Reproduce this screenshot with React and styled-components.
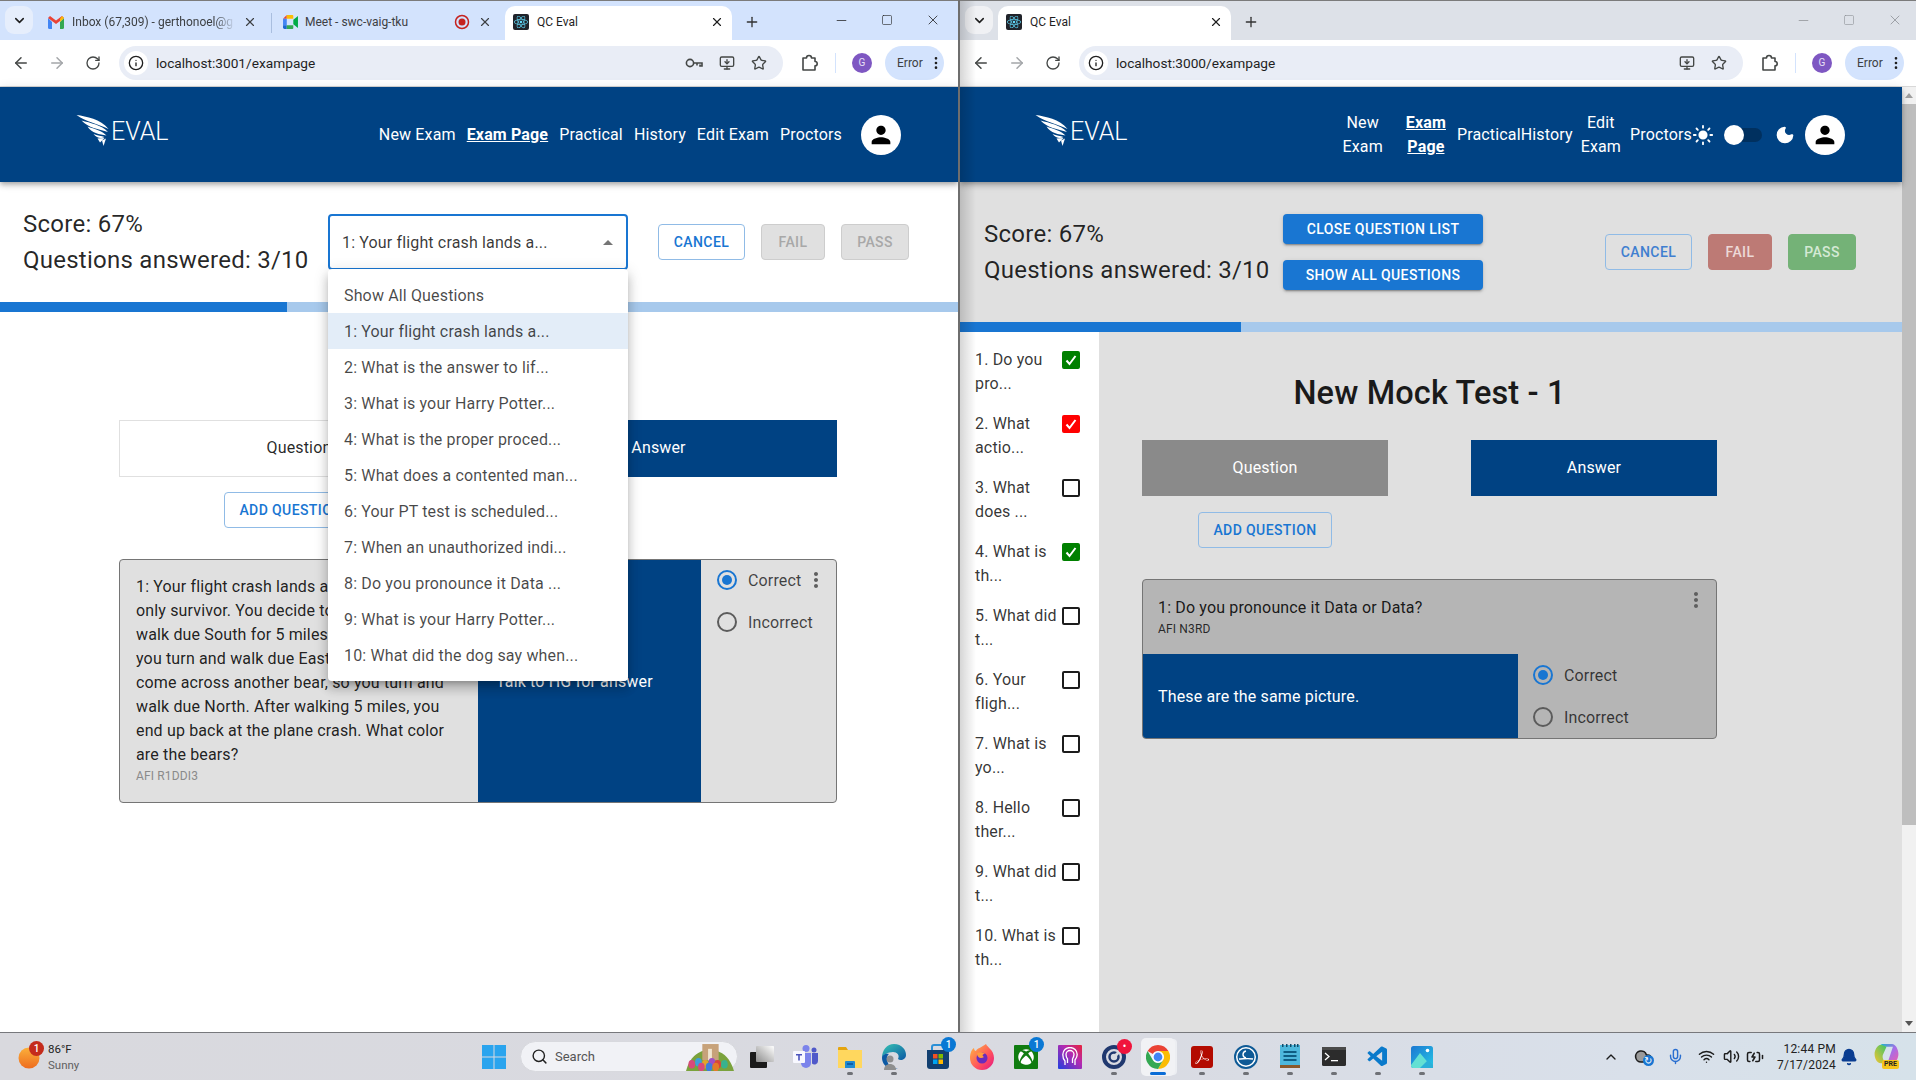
import React from 'react';
import styled, { createGlobalStyle } from 'styled-components';
import { ArrowLeft, ArrowRight, RotateCw, Info, MonitorDown, Star, EllipsisVertical, X, Plus, Minus, Square, ChevronDown, ChevronUp, Sun, Moon, Search, Mic, Wifi, Volume2, BatteryCharging, Bell, Cloud } from 'lucide-react';
import { FaReact, FaXbox } from 'react-icons/fa';
import { SiAdobeacrobatreader } from 'react-icons/si';
import { VscVscode } from 'react-icons/vsc';

const Global = createGlobalStyle`
  html, body { margin: 0; padding: 0; height: 1080px; overflow: hidden; background: #fff; }
  body { font-family: Roboto, "Liberation Sans", sans-serif; color: rgba(0,0,0,.87); letter-spacing: .15px; }
  * { box-sizing: border-box; }
`;

const Desktop = styled.div`display:flex;flex-direction:column;width:1916px;height:1080px;`;
const Windows = styled.div`display:flex;height:1032px;background:#6e6e6e;`;
const Win = styled.section`
  position:relative;display:flex;flex-direction:column;width:${p => p.$w}px;margin-left:${p => p.$ml || 0}px;
  overflow:hidden;background:#fff;border-top:1px solid #7b7b7b;
`;
const WinShadow = styled.div`
  position:absolute;left:0;top:0;bottom:0;width:16px;pointer-events:none;z-index:9;
  background:linear-gradient(90deg, rgba(0,0,0,.16), rgba(0,0,0,0));
`;

/* browser chrome */
const TabStrip = styled.div`
  display:flex;align-items:flex-end;height:39px;padding-left:5px;background:${p => p.$bg};letter-spacing:0;
`;
const TabMenu = styled.div`
  display:flex;align-items:center;justify-content:center;width:28px;height:28px;margin-bottom:6px;border-radius:9px;
  background:${p => p.$bg};color:#1f1f1f;
`;
const Tab = styled.div`
  position:relative;display:flex;align-items:center;gap:8px;width:${p => p.$w}px;height:34px;padding:0 8px 2px;margin-left:${p => p.$ml || 0}px;
  font-size:12px;color:${p => p.$active ? '#1f1f1f' : '#3d4043'};
  background:${p => p.$active ? '#fff' : 'transparent'};border-radius:10px 10px 0 0;
`;
const TabTitle = styled.span`
  flex:1;white-space:nowrap;overflow:hidden;
  ${p => p.$fade ? 'mask-image:linear-gradient(90deg,#000 88%,transparent);' : ''}
`;
const TabDivider = styled.div`width:1px;height:20px;margin:0 3px 7px 6px;background:#a9bedf;`;
const NewTab = styled.div`display:flex;align-items:center;justify-content:center;width:40px;height:34px;padding-bottom:2px;color:#333;`;
const WinControls = styled.div`
  display:flex;margin-left:auto;height:34px;padding-right:${p => p.$dim ? 0 : 2}px;margin-right:${p => p.$dim ? -2 : 0}px;margin-bottom:3px;
  color:${p => p.$dim ? '#8d9096' : '#1f1f1f'};
`;
const WinControl = styled.div`display:flex;align-items:center;justify-content:center;width:46px;`;
const Toolbar = styled.div`
  display:flex;align-items:center;height:47px;padding:0 8px 1px 3px;background:#fff;border-bottom:1px solid #d8d8d8;letter-spacing:0;
`;
const ToolBtn = styled.div`display:flex;align-items:center;justify-content:center;width:36px;color:${p => p.$dim ? '#a4a6a9' : '#444746'};`;
const Omnibox = styled.div`
  display:flex;align-items:center;flex:0 0 664px;height:34px;margin-left:8px;padding:0 16px 0 5px;border-radius:17px;background:#e9edf6;
  font-size:13.7px;color:#1f1f1f;
`;
const InfoChip = styled.div`display:flex;align-items:center;justify-content:center;width:24px;height:24px;margin-right:8px;border-radius:50%;background:#fff;`;
const OmniText = styled.span`flex:1;`;
const OmniIcons = styled.div`display:flex;gap:16px;color:#444746;`;
const ExtSlot = styled.div`display:flex;justify-content:center;width:52px;color:#444746;line-height:0;`;
const ToolSep = styled.div`width:1px;height:20px;background:#d3e3fd;`;
const ProfileDot = styled.div`
  display:flex;align-items:center;justify-content:center;width:20px;height:20px;margin-left:16px;border-radius:50%;
  background:#7e57c2;color:#e7e0f5;font-size:10px;
`;
const ErrorChip = styled.div`
  display:flex;align-items:center;gap:5px;height:34px;margin-left:13px;padding:0 0 0 12px;border-radius:17px;background:#d3e3fd;
  font-size:12px;color:#3c4043;
`;

/* app */
const Body = styled.div`display:flex;flex:1;min-height:0;`;
const Page = styled.main`display:flex;flex-direction:column;flex:1;min-width:0;background:${p => p.$dark ? '#e0e0e0' : '#fff'};`;
const AppBar = styled.header`
  position:relative;z-index:2;display:flex;align-items:center;flex:0 0 95px;padding:0 57px 0 ${p => p.$pl}px;background:#004283;color:#fff;
  box-shadow:0 2px 4px -1px rgba(0,0,0,.2),0 4px 5px rgba(0,0,0,.14),0 1px 10px rgba(0,0,0,.12);
`;
const Logo = styled.div`display:flex;align-items:center;gap:1px;margin-top:-8px;`;
const LogoWord = styled.span`margin-top:3px;font-size:25px;font-weight:300;letter-spacing:0;line-height:28px;`;
const Nav = styled.nav`display:flex;align-items:center;margin-left:auto;`;
const NavItem = styled.a`
  margin-left:${p => p.$ml}px;font-size:16px;line-height:24px;text-align:center;color:#fff;
  ${p => p.$wrap ? 'width:min-content;' : 'white-space:nowrap;'}
  ${p => p.$on ? 'font-weight:700;text-decoration:underline;' : ''}
`;
const Mode = styled.div`display:flex;align-items:center;color:#fff;`;
const Switch = styled.div`
  display:flex;align-items:center;width:38px;height:14px;margin:0 13px 0 10px;border-radius:7px;background:#00305f;
`;
const SwitchThumb = styled.span`width:20px;height:20px;border-radius:50%;background:#fff;`;
const AvatarBtn = styled.div`
  display:flex;align-items:center;justify-content:center;width:40px;height:40px;margin-left:${p => p.$ml}px;border-radius:50%;background:#fff;
`;
const ScoreRow = styled.div`
  display:flex;align-items:center;flex:0 0 ${p => p.$h}px;padding:0 46px 0 ${p => p.$pl}px;
`;
const Score = styled.div`
  flex:0 0 ${p => p.$w}px;font-size:24px;letter-spacing:.25px;line-height:36px;color:rgba(0,0,0,.85);
`;
const SelectWrap = styled.div`position:relative;width:300px;`;
const SelectBox = styled.div`
  display:flex;align-items:center;justify-content:space-between;height:56px;padding:0 12px;border:2px solid #1976d2;border-radius:4px;background:#fff;font-size:16px;
  color:rgba(0,0,0,.78);
`;
const Caret = styled.span`width:0;height:0;border-left:5px solid transparent;border-right:5px solid transparent;border-bottom:5px solid #757575;margin-right:1px;`;
const Menu = styled.ul`
  position:absolute;z-index:5;left:0;top:55px;width:300px;margin:0;padding:8px 0;list-style:none;background:#fff;border-radius:4px;
  box-shadow:0 5px 5px -3px rgba(0,0,0,.2),0 8px 10px 1px rgba(0,0,0,.14),0 3px 14px 2px rgba(0,0,0,.12);
`;
const MenuItem = styled.li`
  display:flex;align-items:center;height:36px;padding:0 16px;font-size:16px;color:rgba(0,0,0,.72);
  background:${p => p.$sel ? '#e3edf8' : 'transparent'};
`;
const Actions = styled.div`display:flex;gap:16px;margin-left:${p => p.$auto ? 'auto' : '30px'};`;
const Action = styled.button`
  width:${p => p.$w}px;height:36px;padding:0;border-radius:4px;font:500 14px/1 Roboto,sans-serif;letter-spacing:.4px;text-transform:uppercase;
  border:1px solid ${p => p.$border};background:${p => p.$bg};color:${p => p.$fg};
`;
const Solids = styled.div`display:flex;flex-direction:column;gap:16px;margin-top:-1px;`;
const Solid = styled.button`
  width:200px;height:30px;border:0;border-radius:4px;background:#1976d2;color:#fff;font:500 14px/1 Roboto,sans-serif;letter-spacing:.4px;text-transform:uppercase;
  box-shadow:0 3px 1px -2px rgba(0,0,0,.2),0 2px 2px rgba(0,0,0,.14),0 1px 5px rgba(0,0,0,.12);
`;
const Progress = styled.div`display:flex;flex:0 0 10px;background:#a7c9ec;`;
const ProgressFill = styled.div`height:100%;background:#1976d2;`;

const Column = styled.div`width:${p => p.$w}px;margin-left:${p => p.$ml}px;padding-top:${p => p.$pt || 0}px;`;
const TabsRow = styled.div`display:flex;justify-content:space-between;`;
const ModeTab = styled.div`
  display:flex;align-items:center;justify-content:center;width:${p => p.$w}px;height:${p => p.$h}px;padding-bottom:2px;font-size:16px;
  background:${p => p.$bg};color:${p => p.$fg};border:${p => p.$line ? '1px solid #e0e0e0' : '0'};
`;
const AddBtn = styled.button`
  display:block;width:134px;height:36px;margin:${p => p.$m};border:1px solid #90bbe6;border-radius:4px;background:transparent;
  color:#1976d2;font:500 14px/1 Roboto,sans-serif;letter-spacing:.4px;
`;
const Card = styled.article`
  position:relative;display:flex;flex-direction:${p => p.$stack ? 'column' : 'row'};height:${p => p.$h}px;margin-top:${p => p.$mt}px;
  border:1px solid #757575;border-radius:4px;overflow:hidden;background:${p => p.$bg};
`;
const Kebab = styled.div`position:absolute;top:8px;right:8px;color:#5f5f5f;line-height:0;`;
const QuestionPane = styled.div`flex:${p => p.$grow ? '1' : `0 0 ${p.$w}px`};padding:${p => p.$pad};font-size:16px;line-height:24px;`;
const Tag = styled.div`font-size:12px;line-height:18px;color:${p => p.$fg};`;
const AnswerRow = styled.div`display:flex;flex:0 0 84px;`;
const AnswerPane = styled.div`
  display:flex;align-items:center;flex:0 0 ${p => p.$w}px;padding-left:${p => p.$pl}px;background:#004283;color:#fff;font-size:16px;
`;
const Grade = styled.div`display:flex;flex-direction:column;gap:${p => p.$gap}px;padding:${p => p.$pt}px 0 0 ${p => p.$pl}px;`;
const GradeRow = styled.label`display:flex;align-items:center;gap:11px;height:20px;font-size:16px;color:rgba(0,0,0,.72);`;
const Radio = styled.span`
  position:relative;width:20px;height:20px;border-radius:50%;border:2px solid ${p => p.$on ? '#1976d2' : '#5c5c5c'};
  &::after{content:'';display:${p => p.$on ? 'block' : 'none'};position:absolute;inset:3px;border-radius:50%;background:#1976d2;}
`;
const Sidebar = styled.aside`display:flex;flex-direction:column;gap:16px;flex:0 0 139px;padding:16px 0 0 15px;background:#fff;`;
const SideItem = styled.div`display:flex;align-items:flex-start;height:48px;font-size:16px;line-height:24px;color:rgba(0,0,0,.8);`;
const SideText = styled.span`flex:0 0 87px;`;
const Check = styled.span`
  display:flex;align-items:center;justify-content:center;width:18px;height:18px;margin-top:3px;border-radius:2px;color:#fff;
  border:2px solid ${p => p.$c || '#1c1c1c'};background:${p => p.$c || 'transparent'};
`;
const MainPane = styled.div`flex:1;min-width:0;`;
const Title = styled.h1`margin:0 0 27px;padding-top:41px;font-size:32.5px;line-height:40px;font-weight:500;text-align:center;color:#1a1a1a;`;
const ScrollBar = styled.div`display:flex;flex-direction:column;flex:0 0 14px;background:#f1f1f1;`;
const ScrollArrow = styled.div`display:flex;align-items:center;justify-content:center;height:17px;`;
const ScrollTri = styled.span`
  width:0;height:0;border-left:4px solid transparent;border-right:4px solid transparent;
  ${p => p.$down ? 'border-top:5px solid #555;' : 'border-bottom:5px solid #a0a0a0;'}
`;
const ScrollThumb = styled.div`height:721px;background:#bebebe;`;
const ScrollSpace = styled.div`flex:1;`;

/* taskbar */
const Taskbar = styled.footer`
  display:flex;align-items:center;flex:0 0 48px;border-top:1px solid #77787c;letter-spacing:0;
  background:linear-gradient(90deg,#d9d9de 0%,#d9dae1 55%,#d9e0ea 85%,#d6e2ea 100%);
`;
const Weather = styled.div`position:relative;display:flex;align-items:center;gap:3px;flex:0 0 482px;padding-left:18px;`;
const WeatherText = styled.div`font-size:11.5px;line-height:16px;color:#222;`;
const WeatherSub = styled.div`color:#5f5f5f;`;
const Bubble = styled.span`
  position:absolute;z-index:2;display:flex;align-items:center;justify-content:center;top:${p => p.$t}px;left:${p => p.$l}px;width:${p => p.$s}px;height:${p => p.$s}px;
  border-radius:50%;background:${p => p.$bg};color:#fff;font-size:10px;font-weight:500;
`;
const Start = styled.div`flex:0 0 24px;line-height:0;`;
const SearchPill = styled.div`
  display:flex;align-items:center;gap:7px;width:218px;height:31px;margin-left:14px;padding:0 3px 0 10px;border-radius:16px;background:#f1f2f6;border:1px solid #d8d9de;
  font-size:13px;color:#555;
`;
const SearchWord = styled.span`flex:1;`;
const Tiles = styled.div`display:flex;margin-left:2px;`;
const Tile = styled.div`
  position:relative;display:flex;flex:0 0 44px;align-items:center;justify-content:center;width:44px;height:44px;
  & > svg { position:relative; z-index:1; }
  ${p => p.$active ? `&::before{content:'';position:absolute;left:5px;right:5px;top:3px;bottom:3px;border-radius:5px;background:#f1f2f5;box-shadow:3px 0 0 -1px #eceef2;}` : ''}
  ${p => p.$mark ? `&::after{content:'';position:absolute;left:50%;bottom:4px;height:3px;border-radius:2px;transform:translateX(-50%);z-index:1;
    width:${p.$active ? '16px' : '6px'};background:${p.$active ? '#0a6cd6' : '#6f7176'};}` : ''}
`;
const Tray = styled.div`display:flex;align-items:center;margin-left:auto;padding-right:16px;color:#1c1c1c;`;
const TraySlot = styled.div`display:flex;justify-content:center;width:${p => p.$w}px;color:${p => p.$c || 'inherit'};`;
const TrayBadgeWrap = styled.span`position:relative;display:flex;`;
const Clock = styled.div`margin-left:8px;font-size:12px;line-height:16px;text-align:right;letter-spacing:.2px;color:#222;`;
const CopilotBox = styled.div`position:relative;width:26px;height:28px;margin-left:12px;`;
const PreTag = styled.span`
  position:absolute;right:1px;bottom:2px;padding:0 2px;border-radius:2px;background:#f6c51b;color:#222;font-size:7px;font-weight:700;line-height:9px;
`;

/* drawings */
const Wing = () => (
  <svg width="34" height="32" viewBox="0 0 33 32" fill="#fff">
    <path d="M0 0C10 1.5 24 4 32 14 22 9 10 7 0 0Z" />
    <path d="M5 5.5C14 8 25 10 31.5 17 22 14 12 13 5 5.5Z" />
    <path d="M11 11.5C18 14 26 16 30 20.5 23 19.5 15 18 11 11.5Z" />
    <path d="M17 19C21 20.5 25 21 28 22 25 24 20 23 17 19Z" />
    <path d="M21 23.5L28 23 23.5 27.5Z" />
    <path d="M25.5 25.5L29.5 23.5 27 31Z" />
  </svg>
);
const Person = () => (
  <svg width="28" height="28" viewBox="0 0 24 24" fill="#000"><path d="M12 12c2.21 0 4-1.79 4-4s-1.79-4-4-4-4 1.79-4 4 1.79 4 4 4m0 2c-2.67 0-8 1.34-8 4v2h16v-2c0-2.66-5.33-4-8-4" /></svg>
);
const MoreVert = () => (
  <svg width="24" height="24" viewBox="0 0 24 24" fill="currentColor"><path d="M12 8c1.1 0 2-.9 2-2s-.9-2-2-2-2 .9-2 2 .9 2 2 2m0 2c-1.1 0-2 .9-2 2s.9 2 2 2 2-.9 2-2-.9-2-2-2m0 6c-1.1 0-2 .9-2 2s.9 2 2 2 2-.9 2-2-.9-2-2-2" /></svg>
);
const KeyGlyph = () => (
  <svg width="18" height="16" viewBox="0 0 18 16" fill="none" stroke="currentColor" strokeWidth="1.600">
    <circle cx="5" cy="8" r="3.600" /><path d="M8.600 8H17v3h-2V9.500" /><path d="M12 8v2.500" />
  </svg>
);
const ExtGlyph = () => (
  <svg width="18" height="18" viewBox="0 0 18 18" fill="none" stroke="currentColor" strokeWidth="1.600" strokeLinejoin="round">
    <path d="M3 4h3.500a2.500 2.500 0 0 1 5 0H15v3.500a2.200 2.200 0 0 1 0 4.400V16H3z" />
  </svg>
);
const Gmail = () => (
  <svg width="16" height="13" viewBox="0 0 16 13"><path d="M0 2v9.5A1.5 1.5 0 0 0 1.5 13H4V6z" fill="#4285f4" /><path d="M16 2v9.5a1.5 1.5 0 0 1-1.500 1.500H12V6z" fill="#34a853" /><path d="M0 2l8 6 8-6-2-2-6 4.500L2 0z" fill="#ea4335" /><path d="M12 3l2-3 2 2-4 4z" fill="#fbbc04" /></svg>
);
const Meet = () => (
  <svg width="15" height="14" viewBox="0 0 16 15" style={{ marginRight: -1 }}><path d="M0 4l4-4v4z" fill="#ea4335" /><path d="M0 4h4v7H0z" fill="#4285f4" /><path d="M0 11h4v4H1.500A1.500 1.500 0 0 1 0 13.500z" fill="#1967d2" /><path d="M4 0h6a1 1 0 0 1 1 1v3H4z" fill="#fbbc04" /><path d="M4 11h7v3a1 1 0 0 1-1 1H4z" fill="#34a853" /><path d="M11 5l5-4v13l-5-4z" fill="#00ac47" /></svg>
);
const RecordDot = () => (
  <svg width="16" height="16" viewBox="0 0 16 16"><circle cx="8" cy="8" r="6.500" fill="none" stroke="#c5221f" strokeWidth="1.500" /><circle cx="8" cy="8" r="3.500" fill="#c5221f" /></svg>
);
const ReactFav = styled.span`display:flex;align-items:center;justify-content:center;width:16px;height:16px;border-radius:2px;background:#20232a;color:#61dafb;flex:none;`;
const Reactish = () => <ReactFav><FaReact size={14} /></ReactFav>;
const WinLogo = () => (
  <svg width="24" height="24" viewBox="0 0 24 24"><path d="M0 0h11.500v11.500H0zM12.500 0H24v11.500H12.500zM0 12.500h11.500V24H0zM12.500 12.500H24V24H12.500z" fill="#2aa4ee" /></svg>
);
const Sunny = () => (
  <svg width="27" height="28" viewBox="0 0 27 28">
    <defs><linearGradient id="sg" x1="0" y1="0" x2="0" y2="1"><stop offset="0" stopColor="#fbb03b" /><stop offset="1" stopColor="#ee6c1e" /></linearGradient></defs>
    <circle cx="11" cy="15" r="10.500" fill="url(#sg)" />
  </svg>
);
const Easter = () => (
  <svg width="48" height="28" viewBox="0 0 50 29">
    <path d="M0 29C4 14 12 10 18 8L32 8C40 11 46 16 50 29Z" fill="#7aa23c" />
    <rect x="17" y="1" width="17" height="17" fill="#c7a27a" />
    <rect x="23" y="6" width="4" height="12" fill="#f1e6d0" />
    {[['#d84a7a', 6, 22], ['#3e9edb', 13, 20], ['#e3a32a', 20, 22], ['#a14fc2', 27, 20], ['#d8453a', 33, 22], ['#38b28e', 40, 22], ['#d84a7a', 16, 25], ['#3e7edb', 24, 25], ['#e37a2a', 31, 25]].map(([c, x, y]) => (
      <ellipse key={`${x}-${y}`} cx={x} cy={y} rx="3.500" ry="4.500" fill={c} />
    ))}
  </svg>
);
const TaskView = () => (
  <svg width="24" height="24" viewBox="0 0 24 24">
    <defs><linearGradient id="tv" x1="0" y1="1" x2="1" y2="0"><stop offset="0" stopColor="#8d8d8d" /><stop offset="1" stopColor="#fff" /></linearGradient></defs>
    <rect x="0" y="7" width="17" height="16" rx="1" fill="#1b1b1b" />
    <rect x="6" y="1" width="18" height="16" rx="1" fill="url(#tv)" />
  </svg>
);
const Teams = () => (
  <svg width="26" height="24" viewBox="0 0 26 24">
    <circle cx="13" cy="3.500" r="3.500" fill="#7b83eb" /><circle cx="21" cy="5" r="2.500" fill="#5059c9" />
    <path d="M8 8h10v10a5 5 0 0 1-10 0z" fill="#7b83eb" /><path d="M19 8h6v8a3.500 3.500 0 0 1-6 2.500z" fill="#5059c9" />
    <rect x="0" y="6" width="12" height="12" rx="1" fill="#f8f8ff" /><path d="M3 9h6v1.500H6.800V15.500H5.200V10.500H3z" fill="#4b53bc" />
  </svg>
);
const Folder = () => (
  <svg width="24" height="24" viewBox="0 0 24 24">
    <path d="M0 3a1 1 0 0 1 1-1h7l2 3H0z" fill="#e5a50f" /><path d="M0 5h24v18H0z" fill="#ffd75e" />
    <path d="M7 17a1 1 0 0 1 1-1h8a1 1 0 0 1 1 1v6H7z" fill="#1f8ad2" /><rect x="9" y="18" width="6" height="2" fill="#0d5ea8" />
  </svg>
);
const Edge = () => (
  <svg width="24" height="26" viewBox="0 0 24 26">
    <defs><linearGradient id="eg" x1="0" y1="0" x2="1" y2="1"><stop offset="0" stopColor="#38c4b4" /><stop offset="1" stopColor="#0c59a4" /></linearGradient></defs>
    <path d="M12 0C20 0 24 6 24 11c0 5-6 6-8 4 2-4-1-7-5-7C6 8 1 11 0 14 0 6 5 0 12 0z" fill="url(#eg)" />
    <path d="M0 14c0-3 4-5 7-4-3 2-3 9 2 13 2 1 5 1 7 1-9 3-16-3-16-10z" fill="#0c59a4" />
    <circle cx="8" cy="15" r="3.500" fill="#8f8f8f" /><path d="M2 26c0-4 3-6 6-6s6 2 6 6z" fill="#8f8f8f" />
  </svg>
);
const StoreBag = () => (
  <svg width="24" height="26" viewBox="0 0 24 26">
    <path d="M6 7V3a2 2 0 0 1 2-2h8a2 2 0 0 1 2 2v4" stroke="#2b8fd6" strokeWidth="2" fill="none" />
    <path d="M1 6h22v16a3 3 0 0 1-3 3H4a3 3 0 0 1-3-3z" fill="#123f70" />
    <rect x="7" y="10" width="4.500" height="4.500" fill="#f25022" /><rect x="12.500" y="10" width="4.500" height="4.500" fill="#7fba00" />
    <rect x="7" y="15.500" width="4.500" height="4.500" fill="#00a4ef" /><rect x="12.500" y="15.500" width="4.500" height="4.500" fill="#ffb900" />
  </svg>
);
const Firefox = () => (
  <svg width="24" height="26" viewBox="0 0 24 26">
    <defs><linearGradient id="ff" x1="0" y1="0" x2="1" y2="1"><stop offset="0" stopColor="#ffbd3f" /><stop offset=".6" stopColor="#ff4f5e" /><stop offset="1" stopColor="#e31587" /></linearGradient></defs>
    <path d="M16 0c1 3 8 6 8 14a12 12 0 0 1-24 0C0 9 2 5 4 4c0 2 1 3 2 3 1-3 5-3 10-7z" fill="url(#ff)" />
    <circle cx="12" cy="14" r="5.500" fill="#6a2bbd" /><path d="M7 9c3-1 6-1 8 1-3 0-3 2-1 3-3 2-7 1-7-4z" fill="#ff9a3d" />
  </svg>
);
const Tinted = styled.span`
  display:flex;align-items:center;justify-content:center;width:${p => p.$s}px;height:${p => p.$s}px;border-radius:${p => p.$r}px;background:${p => p.$bg};color:${p => p.$fg || '#fff'};
`;
const HeadGlyph = () => (
  <svg width="16" height="19" viewBox="0 0 16 19" fill="none" stroke="#fff" strokeWidth="1.300">
    <path d="M3 18v-4C1 12 .8 9 .8 7.500a7.200 7 0 0 1 14.400 0c0 2-1 4-2.200 5.500v5" />
    <path d="M5.500 16v-4C4 10 4 9 4 7.500a4 4 0 0 1 8 0C12 9 11.500 10 10.500 12v4" />
  </svg>
);
const Target = () => (
  <svg width="24" height="24" viewBox="0 0 24 24" fill="none">
    <circle cx="12" cy="12" r="10" stroke="#20386f" strokeWidth="4" /><circle cx="12" cy="12" r="4.500" stroke="#20386f" strokeWidth="2.500" /><path d="M12 12L22 2" stroke="#d8dae0" strokeWidth="3" />
  </svg>
);
const Chrome = () => (
  <svg width="24" height="24" viewBox="0 0 24 24">
    <path d="M12 0a12 12 0 0 1 10.400 6H12a6 6 0 0 0-5.200 3L1.600 6A12 12 0 0 1 12 0z" fill="#ea4335" />
    <path d="M22.400 6A12 12 0 0 1 12 24l5.200-9a6 6 0 0 0 0-6 6 6 0 0 0-5.200-3z" fill="#fbbc04" />
    <path d="M1.600 6l5.200 9a6 6 0 0 0 5.200 3 6 6 0 0 0 5.200-3L12 24A12 12 0 0 1 1.600 6z" fill="#34a853" />
    <circle cx="12" cy="12" r="5" fill="#4285f4" stroke="#fff" strokeWidth="1.200" />
  </svg>
);
const Globeish = () => (
  <svg width="24" height="24" viewBox="0 0 24 24" fill="none">
    <circle cx="12" cy="12" r="11" fill="#fff" stroke="#0e5a96" strokeWidth="2" /><circle cx="12" cy="12" r="8.500" fill="#0e5a96" />
    <path d="M5 14c4 0 9-1 14 0M12 6c-4 1-4 6 0 7" stroke="#fff" strokeWidth="1.400" />
  </svg>
);
const Notepad = () => (
  <svg width="20" height="25" viewBox="0 0 20 25">
    <rect x="0" y="1" width="20" height="20" fill="#4eb8dc" /><rect x="0" y="21" width="20" height="3" fill="#8b5a2b" />
    {[2, 6, 10, 14, 17].map(x => <rect key={x} x={x} y="0" width="1.500" height="3" fill="#0f4b6a" />)}
    {[7, 11, 15].map(y => <rect key={y} x="3.500" y={y} width="13" height="2" fill="#0f5d82" />)}
  </svg>
);
const Terminal = () => (
  <svg width="24" height="19" viewBox="0 0 24 19">
    <rect width="24" height="19" rx="1.500" fill="#2c2c2c" /><rect width="24" height="3" fill="#4a4a4a" />
    <path d="M3 6l4 3.500-4 3.500" stroke="#fff" strokeWidth="1.300" fill="none" /><rect x="9" y="13" width="7" height="1.300" fill="#fff" />
  </svg>
);
const Photos = () => (
  <svg width="22" height="22" viewBox="0 0 22 22">
    <defs><linearGradient id="ph" x1="0" y1="0" x2="1" y2="1"><stop offset="0" stopColor="#1b77d2" /><stop offset="1" stopColor="#27c6e5" /></linearGradient></defs>
    <rect width="22" height="22" rx="2.500" fill="url(#ph)" /><circle cx="16.500" cy="4.500" r="1.800" fill="#fff" />
    <path d="M0 19L9 7l5 6 8 9H2.500A2.500 2.500 0 0 1 0 19z" fill="#63e0d3" /><path d="M9 22l8-8 5 5v3z" fill="#2bb0d8" />
  </svg>
);
const SyncCloud = () => (
  <TrayBadgeWrap>
    <Cloud size={19} fill="#9a9a9a" color="#1c1c1c" />
    <Bubble $t={8} $l={9} $s={11} $bg="#1976d2">↻</Bubble>
  </TrayBadgeWrap>
);
const Copilot = () => (
  <svg width="25" height="22" viewBox="0 0 26 24">
    <defs><linearGradient id="cp" x1="0" y1="0" x2="1" y2="1"><stop offset="0" stopColor="#1fb6c9" /><stop offset=".5" stopColor="#a56ee8" /><stop offset="1" stopColor="#ef5da8" /></linearGradient>
      <linearGradient id="cq" x1="0" y1="1" x2="1" y2="0"><stop offset="0" stopColor="#f3c531" /><stop offset="1" stopColor="#35c46a" /></linearGradient></defs>
    <path d="M7 1h12c4 0 7 6 7 11s-3 10-7 10h-5l6-18H9z" fill="url(#cp)" />
    <path d="M7 2C3 2 0 8 0 12s2 10 7 10h7c-4-1-6-6-5-9l4-9z" fill="url(#cq)" />
  </svg>
);

const BrowserBar = ({ url, withKey }) => (
  <Toolbar>
    <ToolBtn><ArrowLeft size={18} /></ToolBtn>
    <ToolBtn $dim><ArrowRight size={18} /></ToolBtn>
    <ToolBtn><RotateCw size={16} /></ToolBtn>
    <Omnibox>
      <InfoChip><Info size={16} color="#1f1f1f" /></InfoChip>
      <OmniText>{url}</OmniText>
      <OmniIcons>
        {withKey && <KeyGlyph />}
        <MonitorDown size={16} />
        <Star size={16} />
      </OmniIcons>
    </Omnibox>
    <ExtSlot><ExtGlyph /></ExtSlot>
    <ToolSep />
    <ProfileDot>G</ProfileDot>
    <ErrorChip>Error<EllipsisVertical size={16} color="#1f1f1f" /></ErrorChip>
  </Toolbar>
);

const Controls = ({ dim }) => (
  <WinControls $dim={dim}>
    <WinControl><Minus size={15} strokeWidth={1.2} /></WinControl>
    <WinControl><Square size={12} strokeWidth={1.2} /></WinControl>
    <WinControl><X size={16} strokeWidth={1.2} /></WinControl>
  </WinControls>
);

const AppHeader = ({ dense }) => (
  <AppBar $pl={dense ? 75 : 76}>
    <Logo><Wing /><LogoWord>EVAL</LogoWord></Logo>
    {dense ? (
      <Nav>
        <NavItem $wrap $ml={0}>New Exam</NavItem>
        <NavItem $wrap $on $ml={23}>Exam Page</NavItem>
        <NavItem $ml={11}>Practical</NavItem>
        <NavItem $ml={0}>History</NavItem>
        <NavItem $wrap $ml={8}>Edit Exam</NavItem>
        <NavItem $ml={9}>Proctors</NavItem>
        <Mode>
          <Sun size={22} fill="#fff" />
          <Switch><SwitchThumb /></Switch>
          <Moon size={20} fill="#fff" />
        </Mode>
        <AvatarBtn $ml={10}><Person /></AvatarBtn>
      </Nav>
    ) : (
      <Nav>
        <NavItem $ml={0}>New Exam</NavItem>
        <NavItem $on $ml={11}>Exam Page</NavItem>
        <NavItem $ml={11}>Practical</NavItem>
        <NavItem $ml={11}>History</NavItem>
        <NavItem $ml={11}>Edit Exam</NavItem>
        <NavItem $ml={11}>Proctors</NavItem>
        <AvatarBtn $ml={19}><Person /></AvatarBtn>
      </Nav>
    )}
  </AppBar>
);

const CardMenu = () => <Kebab><MoreVert /></Kebab>;

const Grading = ({ gap, pt, pl }) => (
  <Grade $gap={gap} $pt={pt} $pl={pl}>
    <GradeRow><Radio $on />Correct</GradeRow>
    <GradeRow><Radio />Incorrect</GradeRow>
  </Grade>
);

const menu = [
  'Show All Questions', '1: Your flight crash lands a...', '2: What is the answer to lif...', '3: What is your Harry Potter...',
  '4: What is the proper proced...', '5: What does a contented man...', '6: Your PT test is scheduled...', '7: When an unauthorized indi...',
  '8: Do you pronounce it Data ...', '9: What is your Harry Potter...', '10: What did the dog say when...',
];
const side = [
  ['1. Do you pro...', '#008000'], ['2. What actio...', '#ff0000'], ['3. What does ...'], ['4. What is th...', '#008000'], ['5. What did t...'],
  ['6. Your fligh...'], ['7. What is yo...'], ['8. Hello ther...'], ['9. What did t...'], ['10. What is th...'],
];
const riddle = [
  '1: Your flight crash lands and you are the',
  'only survivor. You decide to leave, so you',
  'walk due South for 5 miles, see a bear,',
  'you turn and walk due East for 5 miles,',
  'come across another bear, so you turn and',
  'walk due North. After walking 5 miles, you',
  'end up back at the plane crash. What color',
  'are the bears?',
];

const LeftWindow = () => (
  <Win $w={958}>
    <TabStrip $bg="#d3e3fd">
      <TabMenu $bg="#e6eefc"><ChevronDown size={15} strokeWidth={2.5} /></TabMenu>
      <Tab $w={225} $ml={7}>
        <Gmail /><TabTitle $fade>Inbox (67,309) - gerthonoel@g</TabTitle><X size={14} />
      </Tab>
      <TabDivider />
      <Tab $w={225}>
        <Meet /><TabTitle>Meet - swc-vaig-tku</TabTitle><RecordDot /><X size={14} />
      </Tab>
      <Tab $w={227} $active $ml={5}>
        <Reactish /><TabTitle>QC Eval</TabTitle><X size={14} />
      </Tab>
      <NewTab><Plus size={16} /></NewTab>
      <Controls />
    </TabStrip>
    <BrowserBar url="localhost:3001/exampage" withKey />
    <Body>
      <Page>
        <AppHeader />
        <ScoreRow $h={120} $pl={23}>
          <Score $w={305}>Score: 67%<br />Questions answered: 3/10</Score>
          <SelectWrap>
            <SelectBox>1: Your flight crash lands a...<Caret /></SelectBox>
            <Menu>
              {menu.map((m, i) => <MenuItem key={m} $sel={i === 1}>{m}</MenuItem>)}
            </Menu>
          </SelectWrap>
          <Actions>
            <Action $w={87} $border="#90bbe6" $bg="#fff" $fg="#1976d2">Cancel</Action>
            <Action $w={64} $border="#cdcdcd" $bg="#e0e0e0" $fg="#a8a8a8">Fail</Action>
            <Action $w={68} $border="#cdcdcd" $bg="#e0e0e0" $fg="#a8a8a8">Pass</Action>
          </Actions>
        </ScoreRow>
        <Progress><ProgressFill style={{ width: 287 }} /></Progress>
        <Column $w={718} $ml={119} $pt={108}>
          <TabsRow>
            <ModeTab $w={360} $h={57} $bg="#fff" $fg="rgba(0,0,0,.85)" $line>Question</ModeTab>
            <ModeTab $w={357} $h={57} $bg="#004283" $fg="#fff">Answer</ModeTab>
          </TabsRow>
          <AddBtn $m="15px 0 0 105px">ADD QUESTION</AddBtn>
          <Card $h={244} $mt={31} $bg="#e0e0e0">
            <QuestionPane $w={358} $pad="15px 0 0 16px">
              {riddle.map(line => <div key={line}>{line}</div>)}
              <Tag $fg="#8a8a8a">AFI R1DDI3</Tag>
            </QuestionPane>
            <AnswerPane $w={223} $pl={18}>Talk to HG for answer</AnswerPane>
            <Grading gap={22} pt={10} pl={16} />
            <CardMenu />
          </Card>
        </Column>
      </Page>
    </Body>
  </Win>
);

const RightWindow = () => (
  <Win $w={956} $ml={2}>
    <TabStrip $bg="#dde1e8">
      <TabMenu $bg="#f0f1f4"><ChevronDown size={15} strokeWidth={2.5} /></TabMenu>
      <Tab $w={233} $active $ml={5}>
        <Reactish /><TabTitle>QC Eval</TabTitle><X size={14} />
      </Tab>
      <NewTab><Plus size={16} /></NewTab>
      <Controls dim />
    </TabStrip>
    <BrowserBar url="localhost:3000/exampage" />
    <Body>
      <Page $dark>
        <AppHeader dense />
        <ScoreRow $h={140} $pl={24}>
          <Score $w={299}>Score: 67%<br />Questions answered: 3/10</Score>
          <Solids>
            <Solid>Close Question List</Solid>
            <Solid>Show All Questions</Solid>
          </Solids>
          <Actions $auto>
            <Action $w={87} $border="#90bbe6" $bg="transparent" $fg="#3f7fd0">Cancel</Action>
            <Action $w={64} $border="#bd7a75" $bg="#bd7a75" $fg="#ecd9d7">Fail</Action>
            <Action $w={68} $border="#74b277" $bg="#74b277" $fg="#d4e9d5">Pass</Action>
          </Actions>
        </ScoreRow>
        <Progress><ProgressFill style={{ width: 281 }} /></Progress>
        <Body>
          <Sidebar>
            {side.map(([t, c]) => (
              <SideItem key={t}>
                <SideText>{t}</SideText>
                <Check $c={c}>{c && <svg width="14" height="14" viewBox="0 0 14 14" fill="none" stroke="#fff" strokeWidth="2"><path d="M2.500 7.500L5.500 11 11.500 3" /></svg>}</Check>
              </SideItem>
            ))}
          </Sidebar>
          <MainPane>
            <Column $w={575} $ml={43}>
              <Title>New Mock Test - 1</Title>
              <TabsRow>
                <ModeTab $w={246} $h={56} $bg="#8a8a8a" $fg="#fff">Question</ModeTab>
                <ModeTab $w={246} $h={56} $bg="#004283" $fg="#fff">Answer</ModeTab>
              </TabsRow>
              <AddBtn $m="16px 0 0 56px">ADD QUESTION</AddBtn>
              <Card $stack $h={160} $mt={31} $bg="#b5b5b5">
                <QuestionPane $grow $pad="16px 16px 0 15px">
                  1: Do you pronounce it Data or Data?
                  <Tag $fg="rgba(0,0,0,.8)">AFI N3RD</Tag>
                </QuestionPane>
                <AnswerRow>
                  <AnswerPane $w={375} $pl={15}>These are the same picture.</AnswerPane>
                  <Grading gap={22} pt={11} pl={15} />
                </AnswerRow>
                <CardMenu />
              </Card>
            </Column>
          </MainPane>
        </Body>
      </Page>
      <ScrollBar>
        <ScrollArrow><ScrollTri /></ScrollArrow>
        <ScrollThumb />
        <ScrollSpace />
        <ScrollArrow><ScrollTri $down /></ScrollArrow>
      </ScrollBar>
    </Body>
    <WinShadow />
  </Win>
);

const TaskBar = () => (
  <Taskbar>
    <Weather>
      <Sunny />
      <WeatherText>86°F<WeatherSub>Sunny</WeatherSub></WeatherText>
      <Bubble $t={0} $l={29} $s={15} $bg="#c42b1c">1</Bubble>
    </Weather>
    <Start><WinLogo /></Start>
    <SearchPill>
      <Search size={17} color="#222" />
      <SearchWord>Search</SearchWord>
      <Easter />
    </SearchPill>
    <Tiles>
      <Tile><TaskView /></Tile>
      <Tile><Teams /></Tile>
      <Tile $mark><Folder /></Tile>
      <Tile $mark><Edge /></Tile>
      <Tile><StoreBag /><Bubble $t={2} $l={25} $s={15} $bg="#0a78d4">1</Bubble></Tile>
      <Tile><Firefox /></Tile>
      <Tile><Tinted $s={24} $r={1} $bg="#107c10"><FaXbox size={16} /></Tinted><Bubble $t={2} $l={25} $s={15} $bg="#0a78d4">1</Bubble></Tile>
      <Tile><Tinted $s={24} $r={1} $bg="linear-gradient(45deg,#1f3fe0,#b52ab0 60%,#e8233a)"><HeadGlyph /></Tinted></Tile>
      <Tile $mark><Target /><Bubble $t={4} $l={25} $s={15} $bg="#f0143c">•</Bubble></Tile>
      <Tile $mark $active><Chrome /></Tile>
      <Tile $mark><Tinted $s={22} $r={3} $bg="#b30b00"><SiAdobeacrobatreader size={14} /></Tinted></Tile>
      <Tile $mark><Globeish /></Tile>
      <Tile $mark><Notepad /></Tile>
      <Tile $mark><Terminal /></Tile>
      <Tile $mark><VscVscode size={24} color="#0a7acb" /></Tile>
      <Tile $mark><Photos /></Tile>
    </Tiles>
    <Tray>
      <TraySlot $w={32}><ChevronUp size={16} /></TraySlot>
      <TraySlot $w={32}><SyncCloud /></TraySlot>
      <TraySlot $w={32} $c="#2a6fd0"><Mic size={17} /></TraySlot>
      <TraySlot $w={30}><Wifi size={17} /></TraySlot>
      <TraySlot $w={20}><Volume2 size={17} /></TraySlot>
      <TraySlot $w={28}><BatteryCharging size={18} /></TraySlot>
      <Clock>12:44 PM<br />7/17/2024</Clock>
      <TraySlot $w={26} $c="#0a3d91"><Bell size={18} fill="#0a3d91" /></TraySlot>
      <CopilotBox><Copilot /><PreTag>PRE</PreTag></CopilotBox>
    </Tray>
  </Taskbar>
);

export default function App() {
  return (
    <>
      <Global />
      <Desktop>
        <Windows>
          <LeftWindow />
          <RightWindow />
        </Windows>
        <TaskBar />
      </Desktop>
    </>
  );
}
